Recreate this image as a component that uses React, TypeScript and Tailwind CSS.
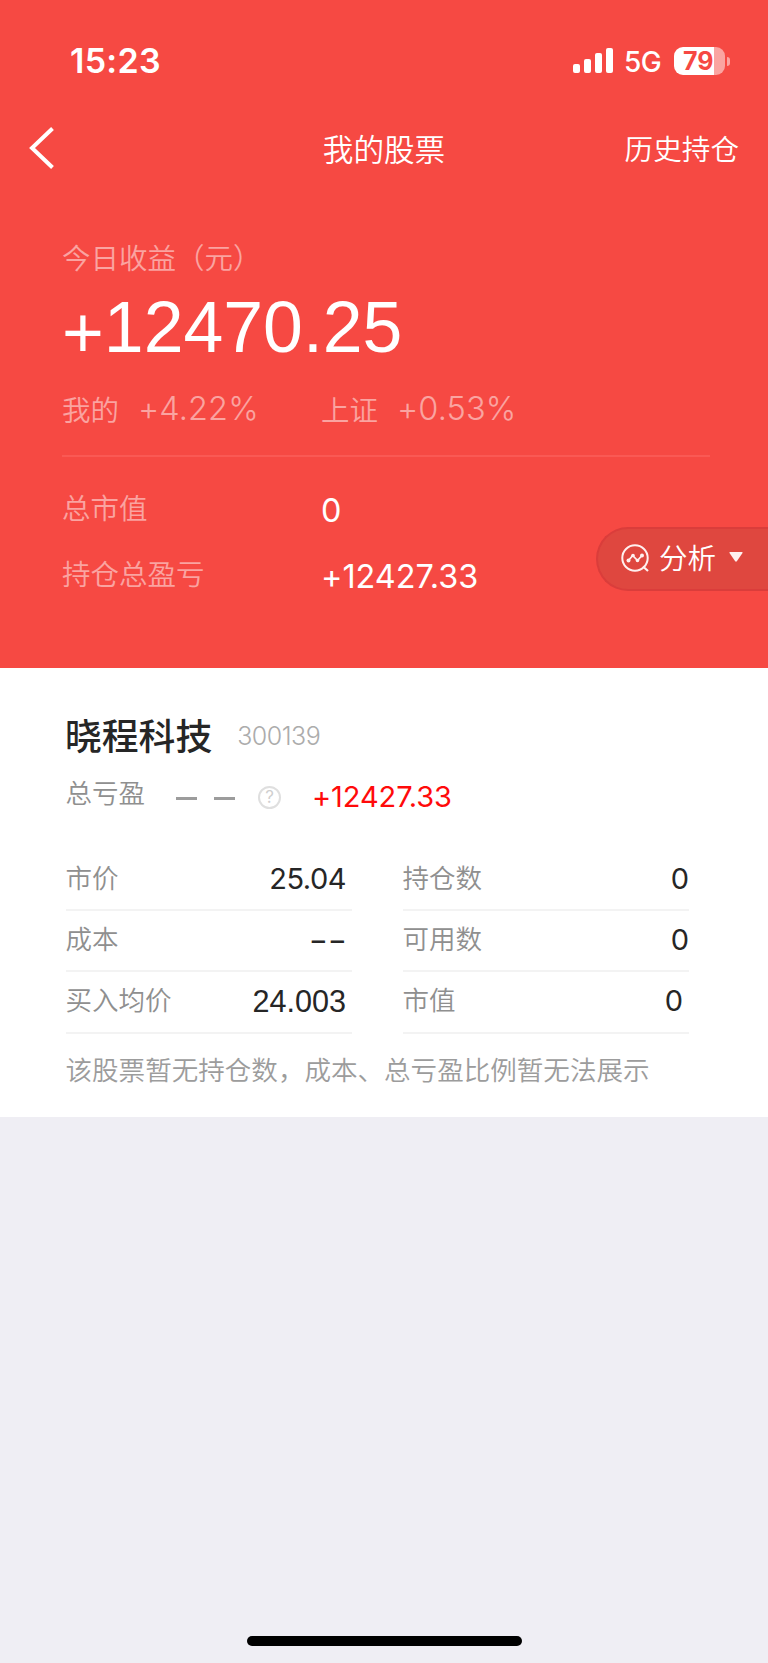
import React from "react";

const CJK = "font-['Noto_Sans_CJK_SC',sans-serif] whitespace-nowrap";
const NUM = "font-['Inter',sans-serif] whitespace-nowrap";
const HELV = "font-['Liberation_Sans',sans-serif] whitespace-nowrap";

function StatusBar() {
  return (
    <div className="flex h-[122px] items-center pl-[70px] pr-[38px] text-white">
      <span className={`${NUM} text-[34px] leading-10 font-semibold tracking-[0.3px]`}>15:23</span>
      <div className="ml-auto flex items-center">
        <div className="mb-[2px] flex h-[25px] items-end gap-1">
          <i className="h-[9px] w-[7px] rounded-[2px] bg-white" />
          <i className="h-[14px] w-[7px] rounded-[2px] bg-white" />
          <i className="h-5 w-[7px] rounded-[2px] bg-white" />
          <i className="h-[25px] w-[7px] rounded-[2px] bg-white" />
        </div>
        <span className={`${NUM} ml-[11px] w-[50px] pt-[2px] text-[28px] leading-8 font-medium tracking-[-0.6px]`}>5G</span>
        <div className="mb-px flex h-7 w-[51px] items-center overflow-hidden rounded-[9px] bg-linear-to-r from-white from-79% to-white/50 to-79% pl-[9px]">
          <span className={`${NUM} text-[25px] leading-7 font-bold text-[#f64843]`}>79</span>
        </div>
        <i className="ml-[2px] h-[9px] w-[3px] rounded-r-full bg-white/50" />
      </div>
    </div>
  );
}

function NavBar() {
  return (
    <div className="grid h-[52px] grid-cols-[1fr_auto_1fr] items-center px-[29px] text-white">
      <svg className="ml-[-1px] h-11 w-7" viewBox="0 0 28 44" fill="none" stroke="white" strokeWidth="4">
        <path d="M24.500 2.500 4 22 24.500 41.500" />
      </svg>
      <h1 className={`${CJK} pb-px text-[30.6px] leading-[48px] font-[350]`}>我的股票</h1>
      <span className={`${CJK} justify-self-end pb-px text-[28.6px] leading-[48px] font-[350]`}>历史持仓</span>
    </div>
  );
}

function IndexRate({ label, value }: { label: string; value: string }) {
  return (
    <div className="flex w-[259px] items-center">
      <span className={`${CJK} text-[28.5px] leading-10 font-[350]`}>{label}</span>
      <span className={`${NUM} ml-[19px] pt-px text-[32.5px] leading-10 font-light tracking-[0.1px] [font-feature-settings:'calt'_0]`}>{value}</span>
    </div>
  );
}

function SummaryRow({ label, value }: { label: string; value: string }) {
  return (
    <div className="flex h-10 items-center">
      <span className={`${CJK} w-[259px] pt-[2px] text-[28.5px] leading-10 font-[350] text-white/50`}>{label}</span>
      <span className={`${NUM} pt-[10px] text-[32.4px] leading-10 text-white [font-feature-settings:'calt'_0]`}>{value}</span>
    </div>
  );
}

function AnalysisButton() {
  return (
    <button className="absolute top-[527px] right-0 flex h-16 w-[172px] items-center rounded-l-full border-2 border-r-0 border-[#da3d3b] bg-[#df473f] pl-[23px] text-white">
      <svg className="mb-[2px] h-7 w-7 shrink-0" viewBox="0 0 28 28" fill="none" stroke="#fff0ef" strokeWidth="2">
        <circle cx="14" cy="14" r="12.7" />
        <path d="m22 22.500 5 4.500" strokeWidth="2.200" />
        <path d="m7.500 16.500 4.200-5 4.800 5 4.500-5" strokeWidth="1.800" />
        <g fill="#fff0ef" stroke="none">
          <circle cx="7.500" cy="16.500" r="2" />
          <circle cx="12" cy="11.500" r="1.800" />
          <circle cx="16.500" cy="16.500" r="1.800" />
          <circle cx="21" cy="11.500" r="2" />
        </g>
      </svg>
      <span className={`${CJK} ml-[10px] pb-[4px] text-[28.5px] leading-10 font-[350]`}>分析</span>
      <svg className="mb-[5px] ml-[13px] h-[10px] w-[14px]" viewBox="0 0 14 10" fill="#fff0ef">
        <path d="M1 0h12q1 0 .5 1L8 9q-1 1.500-2 0L.5 1Q0 0 1 0" />
      </svg>
    </button>
  );
}

function Cell({ label, children }: { label: string; children: React.ReactNode }) {
  return (
    <div className="flex h-[61.4px] items-center justify-between border-b-2 border-[#f3f3f3]">
      <span className={`${CJK} ml-[-0.5px] pb-[5px] text-[26.5px] leading-10 font-[350] text-[#8f8f8f]`}>{label}</span>
      <span className="pb-[2px] text-[29px] leading-10 text-[#262626]">{children}</span>
    </div>
  );
}

export default function App() {
  return (
    <div className="relative flex h-[1663px] w-[768px] flex-col overflow-hidden bg-[#efeef4]">
      <header className="h-[667.5px] bg-[#f64943]">
        <StatusBar />
        <NavBar />
        <section className="px-[62px] pt-[63px]">
          <p className={`${CJK} text-[28.5px] leading-10 font-[350] text-white/50`}>今日收益（元）</p>
          <p className={`${HELV} mt-[14px] h-[72px] text-[71.6px] leading-[72px] text-white`}>
            <span className="align-[-5px] leading-none">+</span>12470.25
          </p>
          <div className="mt-[25px] flex text-white/50">
            <IndexRate label="我的" value="+4.22%" />
            <IndexRate label="上证" value="+0.53%" />
          </div>
          <hr className="mt-[26px] mr-[-4px] border-t-2 border-[#fa5954]" />
          <div className="mt-[29px] flex flex-col gap-[26px]">
            <SummaryRow label="总市值" value="0" />
            <SummaryRow label="持仓总盈亏" value="+12427.33" />
          </div>
        </section>
      </header>

      <main className="h-[449.5px] bg-white px-[66px] pt-[42px]">
        <div className="flex items-center">
          <h2 className={`${CJK} ml-[-1px] text-[36.8px] leading-[48px] font-medium text-[#262626]`}>晓程科技</h2>
          <span className={`${NUM} ml-[25px] pt-[4px] text-[25px] leading-10 font-light tracking-[-0.5px] text-[#acacac]`}>300139</span>
        </div>
        <div className="mt-[14px] flex h-10 items-center">
          <span className={`${CJK} ml-[-0.5px] pt-px text-[26.5px] leading-10 font-[350] text-[#8f8f8f]`}>总亏盈</span>
          <div className="ml-[31px] flex gap-[17px] pt-[13px]">
            <i className="h-[3px] w-[21px] bg-[#9c9c9c]" />
            <i className="h-[3px] w-[21px] bg-[#9c9c9c]" />
          </div>
          <span className={`${NUM} mt-[12px] ml-[23px] flex size-[23px] items-center justify-center rounded-full border-2 border-[#dfdfdf] text-[17px] leading-none text-[#cfcfcf]`}>?</span>
          <span className={`${NUM} ml-[31px] pt-[10px] text-[29px] leading-10 tracking-[-0.1px] text-[#ff0a0a] [font-feature-settings:'calt'_0]`}>+12427.33</span>
        </div>
        <div className="mt-[38px] grid grid-cols-[286px_286px] gap-x-[51px]">
          <Cell label="市价"><b className={`${NUM} pr-[6px] font-normal tracking-[-0.5px]`}>25.04</b></Cell>
          <Cell label="持仓数"><b className={`${NUM} font-normal`}>0</b></Cell>
          <Cell label="成本"><b className={`${NUM} pr-[5px] font-normal [font-feature-settings:'calt'_0]`}>−−</b></Cell>
          <Cell label="可用数"><b className={`${NUM} font-normal`}>0</b></Cell>
          <Cell label="买入均价"><b className={`${HELV} pr-[6px] text-[30.6px] font-normal`}>24.003</b></Cell>
          <Cell label="市值"><b className={`${NUM} pr-[6px] font-normal`}>0</b></Cell>
        </div>
        <p className={`${CJK} mt-[15px] ml-[-0.5px] text-[26.55px] leading-10 font-[350] text-[#9c9c9c]`}>
          该股票暂无持仓数，成本、总亏盈比例暂无法展示
        </p>
      </main>

      <div className="mx-auto mt-auto mb-[17px] h-[10px] w-[275px] rounded-full bg-black" />
      <AnalysisButton />
    </div>
  );
}
